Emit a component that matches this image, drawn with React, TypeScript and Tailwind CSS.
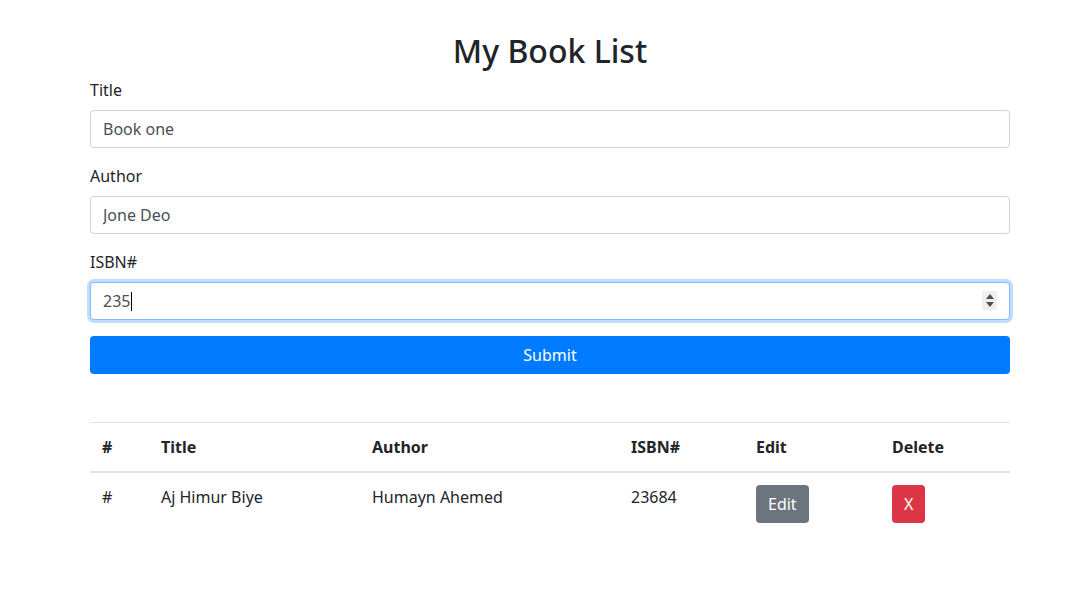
const font = { fontFamily: '"Segoe UI", "Noto Sans", Roboto, sans-serif' };

type Book = { title: string; author: string; isbn: string };

const books: Book[] = [{ title: "Aj Himur Biye", author: "Humayn Ahemed", isbn: "23684" }];

const Field = ({ label, value }: { label: string; value: string }) => (
  <div className="mb-4">
    <label className="mb-2 block text-base leading-6">{label}</label>
    <input
      readOnly
      value={value}
      className="block h-[38px] w-full rounded border border-[#ced4da] bg-white px-3 text-base leading-6 text-[#495057] outline-none"
    />
  </div>
);

export default function App() {
  return (
    <div className="min-h-screen bg-white text-[#212529]" style={font}>
      <div className="ml-[90px] w-[920px] pt-[32px]">
        <h1 className="mb-2 text-center text-[32px] leading-[38px] font-medium">My Book List</h1>

        <form>
          <Field label="Title" value="Book one" />
          <Field label="Author" value="Jone Deo" />
          <div className="mb-4">
            <label className="mb-2 block text-base leading-6">ISBN#</label>
            <div className="relative flex h-[38px] w-full items-center rounded border border-[#80bdff] bg-white px-3 text-base leading-6 text-[#495057] shadow-[0_0_0_3px_rgba(0,123,255,0.25)]">
              <span>235</span>
              <span className="ml-px h-[19px] w-px bg-black" />
              <div className="absolute top-[8px] right-[12px] flex h-[19px] w-[15px] flex-col items-center justify-center gap-[3px] bg-[#efefef]">
                <svg width="8" height="5" viewBox="0 0 8 5">
                  <path d="M4 0 L8 5 L0 5 Z" fill="#505050" />
                </svg>
                <svg width="8" height="5" viewBox="0 0 8 5">
                  <path d="M0 0 L8 0 L4 5 Z" fill="#505050" />
                </svg>
              </div>
            </div>
          </div>
          <button
            type="button"
            className="block h-[38px] w-full rounded bg-[#007bff] text-base leading-6 text-white"
          >
            Submit
          </button>
        </form>

        <table className="mt-12 w-full border-collapse text-left text-base leading-6">
          <thead>
            <tr className="border-t border-[#dee2e6]">
              <th className="w-[59px] border-b-2 border-[#dee2e6] p-3 font-bold">#</th>
              <th className="w-[211px] border-b-2 border-[#dee2e6] p-3 font-bold">Title</th>
              <th className="w-[259px] border-b-2 border-[#dee2e6] p-3 font-bold">Author</th>
              <th className="w-[125px] border-b-2 border-[#dee2e6] p-3 font-bold">ISBN#</th>
              <th className="w-[136px] border-b-2 border-[#dee2e6] p-3 font-bold">Edit</th>
              <th className="border-b-2 border-[#dee2e6] p-3 font-bold">Delete</th>
            </tr>
          </thead>
          <tbody>
            {books.map((b) => (
              <tr key={b.isbn} className="align-top">
                <td className="p-3">#</td>
                <td className="p-3">{b.title}</td>
                <td className="p-3">{b.author}</td>
                <td className="p-3">{b.isbn}</td>
                <td className="p-3">
                  <button className="h-[38px] rounded bg-[#6c757d] px-3 text-white">Edit</button>
                </td>
                <td className="p-3">
                  <button className="h-[38px] rounded bg-[#dc3545] px-3 text-white">X</button>
                </td>
              </tr>
            ))}
          </tbody>
        </table>
      </div>
    </div>
  );
}
